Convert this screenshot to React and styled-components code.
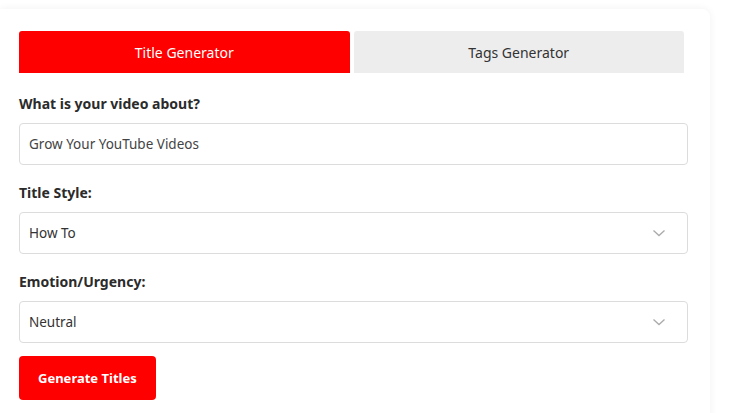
import React, { useState } from 'react';
import styled, { createGlobalStyle } from 'styled-components';

const GlobalStyle = createGlobalStyle`
  html, body {
    margin: 0;
    padding: 0;
    background: #ffffff;
    font-family: 'Noto Sans', 'Open Sans', sans-serif;
    color: #333333;
  }
`;

const Page = styled.div`
  padding: 9px 19px 0 0;
  width: 729px;
  box-sizing: border-box;
`;

const Card = styled.div`
  width: 710px;
  box-sizing: border-box;
  background: #ffffff;
  border-radius: 0 8px 0 0;
  box-shadow: 0 0 8px rgba(0, 0, 0, 0.06);
  padding: 22px 22px 20px 19px;
`;

const Tabs = styled.div`
  display: flex;
  margin-bottom: 21px;
`;

const Tab = styled.button`
  flex: 1;
  height: 42px;
  margin-right: 4px;
  border: none;
  border-radius: 3px 3px 0 0;
  background: ${(props) => (props.active ? '#ff0000' : '#ededed')};
  color: ${(props) => (props.active ? '#ffffff' : '#333333')};
  font-family: inherit;
  font-size: 14px;
  cursor: pointer;
`;

const Field = styled.div`
  margin-bottom: ${(props) => (props.last ? '13px' : '18px')};
`;

const Label = styled.label`
  display: block;
  font-size: 14px;
  font-weight: 700;
  line-height: 20px;
  color: #2b2b2b;
  margin-bottom: 9px;
`;

const TextInput = styled.input`
  display: block;
  width: 100%;
  height: 42px;
  box-sizing: border-box;
  border: 1px solid #dcdcdc;
  border-radius: 4px;
  padding: 0 9px;
  font-family: inherit;
  font-size: 13.5px;
  color: #444444;
  outline: none;
`;

const SelectWrap = styled.div`
  height: 42px;
  box-sizing: border-box;
  border: 1px solid #dcdcdc;
  border-radius: 4px;
  padding: 0 9px;
  display: flex;
  align-items: center;
  justify-content: space-between;
  font-size: 13.5px;
  color: #333333;
`;

const Chevron = styled.svg`
  width: 14px;
  height: 14px;
  margin-right: 12px;
  color: #aaaaaa;
`;

const GenerateButton = styled.button`
  height: 44px;
  padding: 0 19px;
  border: none;
  border-radius: 4px;
  background: #ff0000;
  color: #ffffff;
  font-family: inherit;
  font-size: 13px;
  font-weight: 700;
  cursor: pointer;
`;

const Select = ({ value }) => (
  <SelectWrap>
    <span>{value}</span>
    <Chevron viewBox="0 0 14 14" fill="none" stroke="currentColor" strokeWidth="1.3">
      <path d="M1.5 4.5 L7 9.5 L12.5 4.5" />
    </Chevron>
  </SelectWrap>
);

const App = () => {
  const [tab, setTab] = useState('title');
  const [topic, setTopic] = useState('Grow Your YouTube Videos');

  return (
    <Page>
      <GlobalStyle />
      <Card>
        <Tabs>
          <Tab active={tab === 'title'} onClick={() => setTab('title')}>
            Title Generator
          </Tab>
          <Tab active={tab === 'tags'} onClick={() => setTab('tags')}>
            Tags Generator
          </Tab>
        </Tabs>
        <Field>
          <Label>What is your video about?</Label>
          <TextInput value={topic} onChange={(e) => setTopic(e.target.value)} />
        </Field>
        <Field>
          <Label>Title Style:</Label>
          <Select value="How To" />
        </Field>
        <Field last>
          <Label>Emotion/Urgency:</Label>
          <Select value="Neutral" />
        </Field>
        <GenerateButton>Generate Titles</GenerateButton>
      </Card>
    </Page>
  );
};

export default App;
